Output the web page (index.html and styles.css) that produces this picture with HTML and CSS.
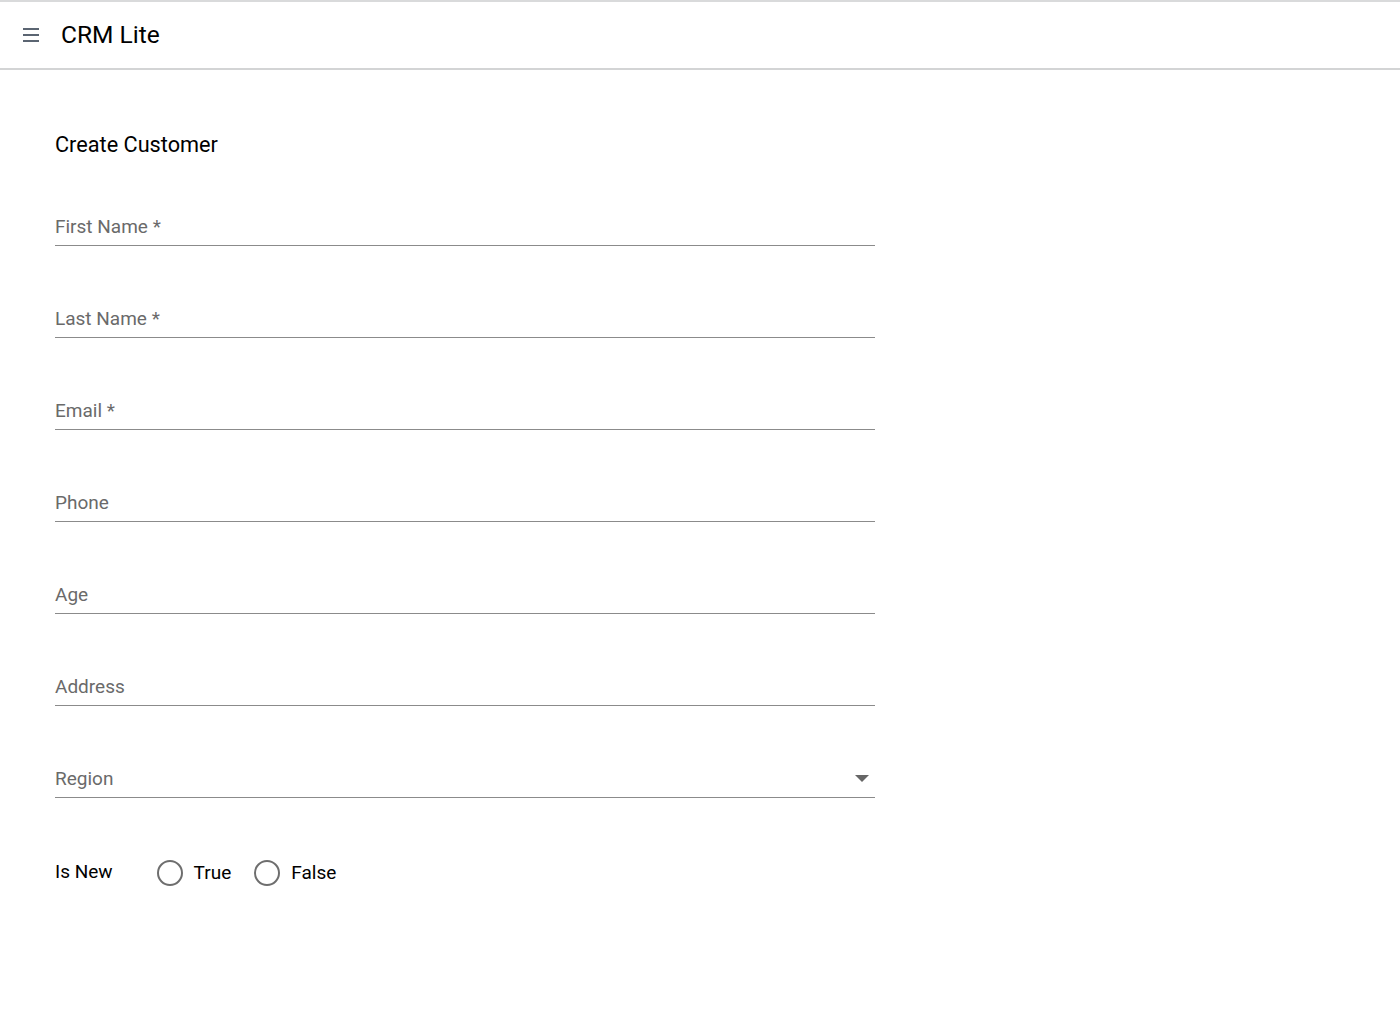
FILE: index.html
```html
<!DOCTYPE html>
<html lang="en">
<head>
<meta charset="utf-8">
<title>CRM Lite</title>
<link rel="stylesheet" href="styles.css">
</head>
<body>
<header class="topbar">
  <button class="menu-btn" aria-label="Menu">
    <svg width="16" height="14" viewBox="0 0 16 14"><rect x="0" y="0" width="16" height="2" fill="#5b6572"/><rect x="0" y="6" width="16" height="2" fill="#5b6572"/><rect x="0" y="12" width="16" height="2" fill="#5b6572"/></svg>
  </button>
  <span class="app-title">CRM Lite</span>
</header>
<main class="content">
  <h1 class="page-title">Create Customer</h1>
  <form class="form">
    <div class="field"><span class="label">First Name *</span></div>
    <div class="field"><span class="label">Last Name *</span></div>
    <div class="field"><span class="label">Email *</span></div>
    <div class="field"><span class="label">Phone</span></div>
    <div class="field"><span class="label">Age</span></div>
    <div class="field"><span class="label">Address</span></div>
    <div class="field select"><span class="label">Region</span><span class="caret"></span></div>
    <div class="radio-row">
      <span class="radio-label">Is New</span>
      <label class="radio"><span class="circle"></span><span class="radio-text">True</span></label>
      <label class="radio"><span class="circle"></span><span class="radio-text">False</span></label>
    </div>
  </form>
</main>
</body>
</html>
```
FILE: styles.css
```css
* { box-sizing: border-box; }
html, body { margin: 0; padding: 0; background: #fff; }
body { font-family: Roboto, "Noto Sans", Arial, sans-serif; color: #000; }

.topbar {
  height: 70px;
  border-top: 2px solid #d9dadb;
  border-bottom: 2px solid #d3d4d5;
  display: flex;
  align-items: center;
  padding-left: 23px;
}
.menu-btn {
  border: 0; background: none; padding: 0; margin: 0;
  width: 16px; height: 14px;
  display: flex;
  margin-top: 0;
}
.app-title {
  font-size: 24.5px;
  margin-left: 22px;
  margin-top: -1px;
  line-height: 28px;
}

.content { padding: 62px 55px 0; }
.page-title {
  margin: 0;
  font-size: 21.7px;
  font-weight: 400;
  line-height: 26px;
}
.form {
  width: 820px;
  margin-top: 57px;
  display: flex;
  flex-direction: column;
  gap: 60px;
}
.field {
  display: flex;
  align-items: center;
  justify-content: space-between;
  border-bottom: 1px solid #8b8b8b;
  padding-bottom: 6px;
  margin-bottom: 1px;
}
.label {
  font-size: 19px;
  line-height: 24px;
  color: #6a6a6a;
}
.caret {
  width: 0; height: 0;
  border-left: 7px solid transparent;
  border-right: 7px solid transparent;
  border-top: 7px solid #666;
  margin-right: 6px;
  margin-top: -2px;
}
.radio-row {
  display: flex;
  align-items: center;
  margin-top: 1px;
}
.radio-label {
  font-size: 19px;
  line-height: 24px;
  margin-right: 44px;
  margin-top: -2px;
}
.radio {
  display: flex;
  align-items: center;
  margin-right: 23px;
}
.circle {
  width: 26px; height: 26px;
  border: 2px solid #6e6e6e;
  border-radius: 50%;
  margin-right: 11px;
}
.radio-text {
  font-size: 19px;
  line-height: 24px;
}
```
